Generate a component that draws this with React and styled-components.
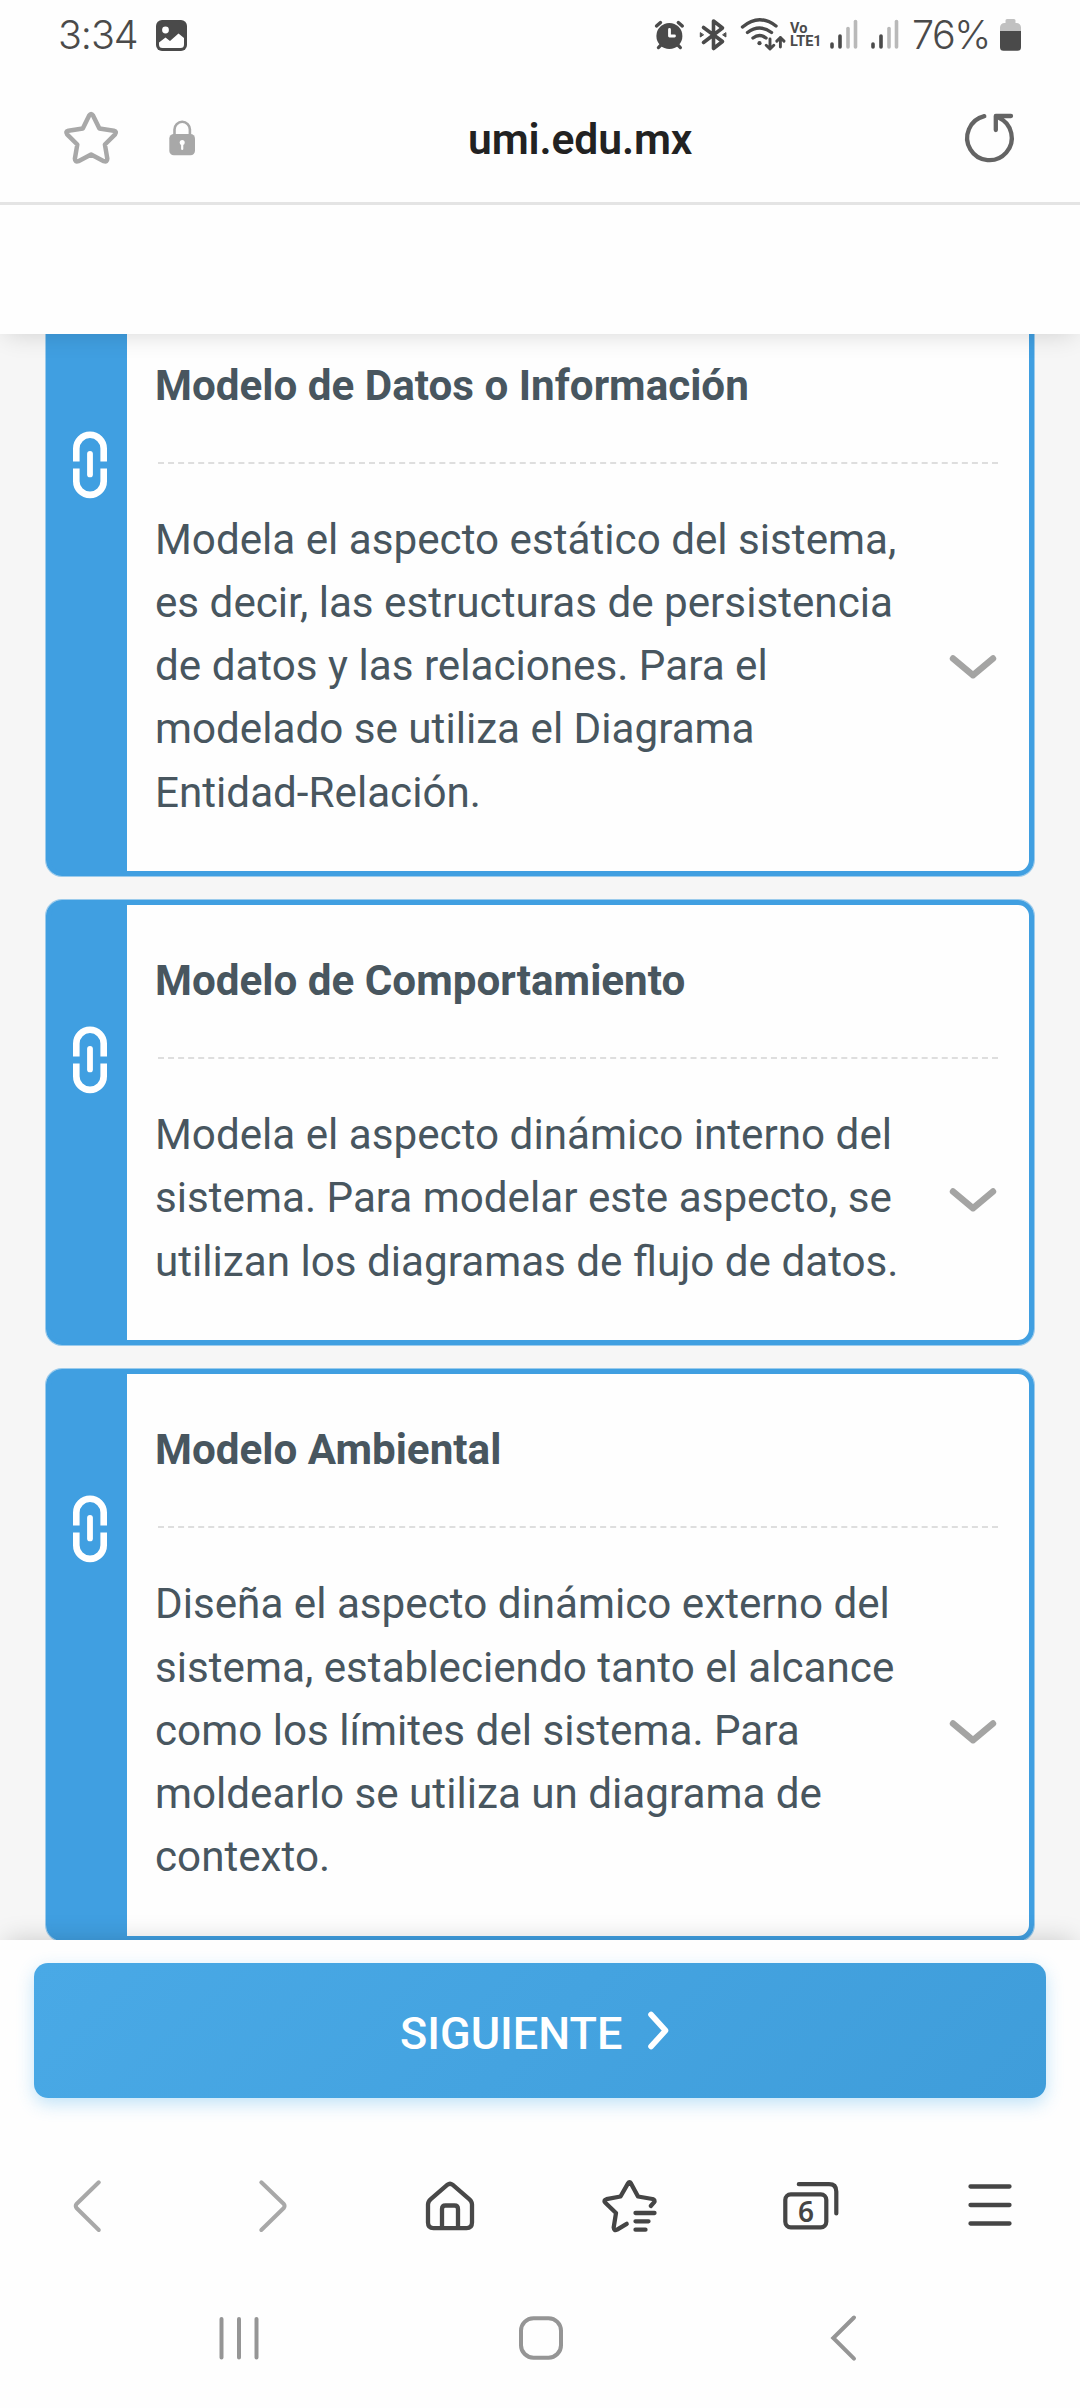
import React from "react";
import styled, { createGlobalStyle } from "styled-components";

const BLUE = "#409fe1";
const INK = "#4a4a4a";
const MUTED = "#a8a8a8";

const GlobalStyle = createGlobalStyle`
  *, *::before, *::after { box-sizing: border-box; }
  body { margin: 0; background: #fefefe; }
`;

const Screen = styled.div`
  width: 1080px;
  height: 2408px;
  overflow: hidden;
  display: flex;
  flex-direction: column;
  background: #fefefe;
  font-family: Roboto, "Liberation Sans", sans-serif;
`;

/* Drawing whose left edge and height follow the bar that holds it. */
const Art = styled.svg.attrs((p) => ({
  viewBox: `${p.$x} ${p.$y || 0} ${p.$w} ${p.$h}`,
  fill: "none",
  strokeLinecap: "round",
  strokeLinejoin: "round",
}))`
  display: block;
  flex: none;
  width: ${(p) => p.$w}px;
  height: ${(p) => p.$h}px;
  margin-left: ${(p) => p.$gap || 0}px;
`;

/* ---------- status bar ---------- */
const StatusBar = styled.header`
  flex: none;
  height: 70px;
  display: flex;
  color: ${INK};
`;

const StatusText = styled.span`
  width: ${(p) => p.$w}px;
  margin-left: ${(p) => p.$gap || 0}px;
  font-family: Inter, Roboto, sans-serif;
  font-size: 39.5px;
  font-weight: 350;
  line-height: 70px;
  letter-spacing: ${(p) => p.$track || 0}px;
  white-space: nowrap;
`;

const Spacer = styled.div`
  flex: 1;
`;

const Volte = styled.div`
  width: 34px;
  margin-left: 4px;
  padding-top: 21.5px;
  display: flex;
  flex-direction: column;
  font-size: 14.5px;
  font-weight: 700;
  line-height: 13.5px;
  white-space: nowrap;
`;

function SignalBars({ x, gap }) {
  const bars = [
    [2, 44, 47, INK],
    [10, 36, 47, INK],
    [18, 28.5, 47, "#b9b9b9"],
    [25.5, 21.5, 47, "#b9b9b9"],
  ];
  return (
    <Art $x={x} $w={28} $h={70} $gap={gap} strokeWidth="3.6">
      {bars.map(([dx, y1, y2, c]) => (
        <path key={dx} d={`M${x + dx} ${y1}V${y2}`} stroke={c} />
      ))}
    </Art>
  );
}

/* ---------- address bar ---------- */
const AddressBar = styled.div`
  flex: none;
  height: 135px;
  display: flex;
  border-bottom: 3px solid #e4e4e4;
`;

const Host = styled.div`
  width: 230px;
  margin-left: 271px;
  font-family: Roboto, sans-serif;
  font-size: 42.6px;
  font-weight: 600;
  line-height: 132px;
  padding-top: 3px;
  letter-spacing: -0.1px;
  color: #222;
  white-space: nowrap;
`;

/* ---------- page ---------- */
const PageHeader = styled.div`
  flex: none;
  height: 129px;
  position: relative;
  z-index: 1;
  background: #fefefe;
  box-shadow: 0 6px 24px -6px rgba(0, 0, 0, 0.16);
`;

const TopChrome = styled.div`
  flex: none;
  position: relative;
  z-index: 2;
  background: #fefefe;
`;

const Viewport = styled.main`
  flex: none;
  height: 1606px;
  overflow: hidden;
  background: #f6f6f6;
`;

const CardList = styled.div`
  margin-top: -29.2px;
  padding: 0 46px;
  display: flex;
  flex-direction: column;
  gap: 24px;
`;

const Card = styled.article`
  display: flex;
  border: 5px solid ${BLUE};
  border-radius: 16px;
  background: linear-gradient(90deg, ${BLUE} 76px, #fefefe 76px);
  box-shadow: 0 0 0 1px rgba(64, 159, 225, 0.5);
`;

const Stripe = styled.div`
  flex: none;
  width: 76px;
  padding: 119px 0 0 19px;
`;

const CardBody = styled.div`
  flex: 1;
  color: #48565f;
`;

const CardTitle = styled.h2`
  margin: 0;
  height: 152px;
  padding: 44px 0 0 28px;
  font-size: 42.19px;
  font-weight: 700;
  line-height: 63.28px;
`;

const Divider = styled.hr`
  margin: 0 31px;
  border: 0;
  border-top: 2px dashed #dedede;
`;

const CardContent = styled.div`
  display: flex;
  align-items: center;
  justify-content: space-between;
  padding: 43.8px 31px 47.4px 28px;
`;

const CardText = styled.p`
  margin: 0;
  width: 760px;
  font-size: 42.19px;
  line-height: 63.28px;
`;

const ChevronSlot = styled.div`
  padding-top: 3px;
`;

function LinkIcon() {
  return (
    <Art $x={0} $w={40} $h={72} stroke="#fff" strokeWidth="6.6">
      <path strokeLinecap="butt" d="M6.3 32.5V19.5a13.7 13.7 0 0 1 27.4 0v13" />
      <path strokeLinecap="butt" d="M6.3 39.5v12.700a13.7 13.7 0 0 0 27.400 0v-12.700" />
      <path strokeLinecap="round" strokeWidth="5.8" d="M20 24.800v20.600" />
    </Art>
  );
}

function ChevronDown() {
  return (
    <Art $x={0} $w={50} $h={28} stroke="#a4a4a3" strokeWidth="6.400">
      <path d="M5 5.500 25 22.300 45 5.500" />
    </Art>
  );
}

const cards = [
  {
    title: "Modelo de Datos o Información",
    text: "Modela el aspecto estático del sistema, es decir, las estructuras de persistencia de datos y las relaciones. Para el modelado se utiliza el Diagrama Entidad-Relación.",
  },
  {
    title: "Modelo de Comportamiento",
    text: "Modela el aspecto dinámico interno del sistema. Para modelar este aspecto, se utilizan los diagramas de flujo de datos.",
  },
  {
    title: "Modelo Ambiental",
    text: "Diseña el aspecto dinámico externo del sistema, estableciendo tanto el alcance como los límites del sistema. Para moldearlo se utiliza un diagrama de contexto.",
  },
];

/* ---------- footer ---------- */
const Footer = styled.footer`
  flex: none;
  height: 210px;
  padding: 23px 34px 0;
  position: relative;
  z-index: 1;
  background: #fefefe;
  box-shadow: 0 -6px 24px -6px rgba(0, 0, 0, 0.18);
`;

const NextButton = styled.button`
  width: 100%;
  height: 135px;
  display: flex;
  padding: 0 0 0 366px;
  border: 0;
  border-radius: 14px;
  background: linear-gradient(135deg, #49a9e6, #3f9dda);
  box-shadow: 0 6px 17px rgba(64, 170, 235, 0.32);
  color: #fff;
  font-family: inherit;
  font-size: 45px;
  font-weight: 500;
  line-height: 141px;
`;

const ButtonLabel = styled.span`
  width: 224px;
  text-align: left;
  white-space: nowrap;
`;

const BottomChrome = styled.div`
  flex: none;
  position: relative;
  z-index: 2;
  background: #fefefe;
`;

const Toolbar = styled.nav`
  height: 120px;
  display: flex;
`;

const TabsIcon = styled.div`
  display: grid;
  margin-left: 121px;
  > * { grid-area: 1 / 1; }
`;

const TabCount = styled.span`
  width: 48px;
  padding-top: 38px;
  text-align: center;
  font-family: "Noto Sans", Roboto, sans-serif;
  font-size: 28px;
  font-weight: 600;
  line-height: 46px;
  color: #454545;
`;

const SystemNav = styled.nav`
  height: 138px;
  display: flex;
`;

export default function App() {
  return (
    <Screen>
      <GlobalStyle />
      <TopChrome>
        <StatusBar>
          <StatusText $w={84} $gap={58} $track={-1.1}>3:34</StatusText>
          <Art $x={155} $w={34} $h={70} $gap={13}>
            <rect x="156" y="20" width="31" height="31" rx="6" fill={INK} />
            <circle cx="165.500" cy="30" r="3.400" fill="#fefefe" />
            <path d="M159 42.500 165.500 37.500 170 41 178.500 33.500 184 38V44.500a3.500 3.500 0 0 1-3.500 3.500H162.500a3.500 3.500 0 0 1-3.500-3.500Z" fill="#fefefe" />
          </Art>
          <Spacer />
          <Art $x={652} $w={33} $h={70}>
            <circle cx="668.400" cy="36" r="13" fill={INK} />
            <path d="M655.500 26 659.500 22.500M681.300 26 677.300 22.500" stroke={INK} strokeWidth="3.400" />
            <path d="M660 45l-2.600 2.600M676.800 45l2.600 2.600" stroke={INK} strokeWidth="3.200" />
            <path d="M668.500 29.500V36H673.500" stroke="#fefefe" strokeWidth="2.800" />
          </Art>
          <Art $x={697} $w={30} $h={70} $gap={12} stroke={INK} strokeWidth="3.600">
            <path d="M702.500 27.500 721.500 41.500 712.500 48.500V21L721.500 28 702.500 42.500" />
            <path fill={INK} strokeWidth="1" d="M699.300 33v4l3-2zM724.900 33v4l-3-2z" />
          </Art>
          <Art $x={738} $w={47} $h={70} $gap={11} stroke={INK} strokeWidth="3.400">
            <path d="M741.500 27q16.500-14 33.500-1M746.500 32.500q12-9 24 0M752 38q6.500-5 13 0" />
            <circle cx="758.500" cy="43.200" r="2.100" fill={INK} stroke="none" />
            <path strokeWidth="2.900" d="M769 39v10m-3.800-3.800 3.800 3.800 3.800-3.800M779.400 47V37.500m-3.600 3.600 3.600-3.600 3.600 3.600" />
          </Art>
          <Volte>
            <span>Vo</span>
            <span>LTE1</span>
          </Volte>
          <SignalBars x={829} gap={6} />
          <SignalBars x={870} gap={13} />
          <StatusText $w={86} $gap={13} $track={-1.5}>76%</StatusText>
          <Art $x={999} $w={81} $h={70} $gap={1}>
            <path d="M1005.500 20.500a1.500 1.500 0 0 1 1.500-1.500h7a1.500 1.500 0 0 1 1.500 1.500V23h1a4.500 4.500 0 0 1 4.500 4.500V33H1000v-5.500a4.500 4.500 0 0 1 4.500-4.500h1Z" fill="#c1c1c1" />
            <path d="M1000 31h21v16.300a3.500 3.500 0 0 1-3.500 3.500h-14a3.500 3.500 0 0 1-3.500-3.500Z" fill={INK} />
          </Art>
        </StatusBar>
        <AddressBar>
          <Art $x={62} $y={70} $w={60} $h={132} $gap={62} stroke={MUTED} strokeWidth="4.500">
            <path d="M89.200 115.500q1.900-3.200 3.800 0l6.400 13 14.400 2.200q3.400.9 1.300 3.600l-10.200 10.200 2.400 14.200q-.1 3.800-3.500 2.500L91.100 154.500l-12.700 6.700q-3.400 1.300-3.500-2.500l2.400-14.200-10.200-10.200q-2.100-2.700 1.300-3.600l14.400-2.200Z" />
          </Art>
          <Art $x={167} $y={70} $w={30} $h={132} $gap={45}>
            <path d="M174.500 136v-6.500a7.700 7.700 0 0 1 15.400 0V136" stroke={MUTED} strokeWidth="2.600" />
            <rect x="169.300" y="134" width="25.700" height="21.300" rx="4.500" fill={MUTED} />
            <circle cx="182.200" cy="142.500" r="2.500" fill="#fefefe" />
            <path d="M182.200 143v6" stroke="#fefefe" strokeWidth="2.200" />
          </Art>
          <Host>umi.edu.mx</Host>
          <Spacer />
          <Art $x={961} $y={70} $w={119} $h={132} stroke="#646464" strokeWidth="4.300">
            <path d="M984.300 116.200A22.300 22.300 0 1 0 998.500 117.500" />
            <path d="M1011 116H995.800V130" />
          </Art>
        </AddressBar>
      </TopChrome>

      <PageHeader />
      <Viewport>
        <CardList>
          {cards.map((c) => (
            <Card key={c.title}>
              <Stripe>
                <LinkIcon />
              </Stripe>
              <CardBody>
                <CardTitle>{c.title}</CardTitle>
                <Divider />
                <CardContent>
                  <CardText>{c.text}</CardText>
                  <ChevronSlot>
                    <ChevronDown />
                  </ChevronSlot>
                </CardContent>
              </CardBody>
            </Card>
          ))}
        </CardList>
      </Viewport>

      <Footer>
        <NextButton>
          <ButtonLabel>SIGUIENTE</ButtonLabel>
          <Art $x={645} $y={1963} $w={30} $h={135} $gap={20.5} stroke="#fff" strokeWidth="5.600">
            <path d="M651 2014.500 665.500 2030.500 651 2046.500" />
          </Art>
        </NextButton>
      </Footer>

      <BottomChrome>
        <Toolbar>
          <Art $x={70} $y={2150} $w={34} $h={120} $gap={70} stroke={MUTED} strokeWidth="4">
            <path d="M98.800 2182.300 76.500 2204q-1.500 2 0 4L98.800 2230" />
          </Art>
          <Art $x={257} $y={2150} $w={34} $h={120} $gap={153} stroke={MUTED} strokeWidth="4">
            <path d="M261.300 2182.300 283.800 2204q1.500 2 0 4L261.300 2230" />
          </Art>
          <Art $x={424} $y={2150} $w={52} $h={120} $gap={133} stroke="#484848" strokeWidth="4.300">
            <path d="M428 2204.500q0-3 2.500-5.200L447.500 2184.700q2.500-2 5 0L469.500 2199.300q2.500 2.200 2.500 5.200V2222.500q0 5.600-5.500 5.600H433.500q-5.500 0-5.500-5.600Z" />
            <path d="M442 2227.500V2209q0-3.500 3.500-3.500h9q3.500 0 3.500 3.500V2227.500" />
          </Art>
          <Art $x={601} $y={2150} $w={60} $h={120} $gap={125} stroke="#454545" strokeWidth="4.300">
            <path d="M650.800 2206l3.200-3.600q1.600-2.200-1.500-3.400L638 2196.500 631 2183.400q-1.500-2.600-3 0L620.500 2196.500 606.500 2199.200q-3.200 1.100-1.400 3.300L616 2213 613.700 2227.500q.2 3.600 3.400 2.100L626.700 2223.800" />
            <path d="M635.500 2213H654.500M635.500 2221.300H648.500M635.500 2229.700H645.500" />
          </Art>
          <TabsIcon>
            <Art $x={782} $y={2150} $w={60} $h={120} stroke="#454545" strokeWidth="4.200">
              <rect x="785.300" y="2194.300" width="41" height="33" rx="5.500" />
              <path d="M798.800 2184.200H829q7.300 0 7.300 7.300V2213.500" />
            </Art>
            <TabCount>6</TabCount>
          </TabsIcon>
          <Art $x={966} $y={2150} $w={50} $h={120} $gap={124} stroke="#454545" strokeWidth="4.300">
            <path d="M970.500 2186.500H1009.500M970.500 2205H1009.500M970.500 2223.500H1009.500" />
          </Art>
        </Toolbar>

        <SystemNav>
          <Art $x={218} $y={2270} $w={42} $h={138} $gap={218} stroke="#959595" strokeWidth="4">
            <path d="M221.500 2319V2357.500M239 2319V2357.500M256.500 2319V2357.500" />
          </Art>
          <Art $x={517} $y={2270} $w={48} $h={138} $gap={257} stroke="#959595" strokeWidth="4">
            <rect x="521" y="2318.200" width="40" height="39.500" rx="12.500" />
          </Art>
          <Art $x={829} $y={2270} $w={30} $h={138} $gap={264} stroke="#959595" strokeWidth="4">
            <path strokeLinejoin="miter" d="M854 2317.500 833.300 2338 854 2358.700" />
          </Art>
        </SystemNav>
      </BottomChrome>
    </Screen>
  );
}
